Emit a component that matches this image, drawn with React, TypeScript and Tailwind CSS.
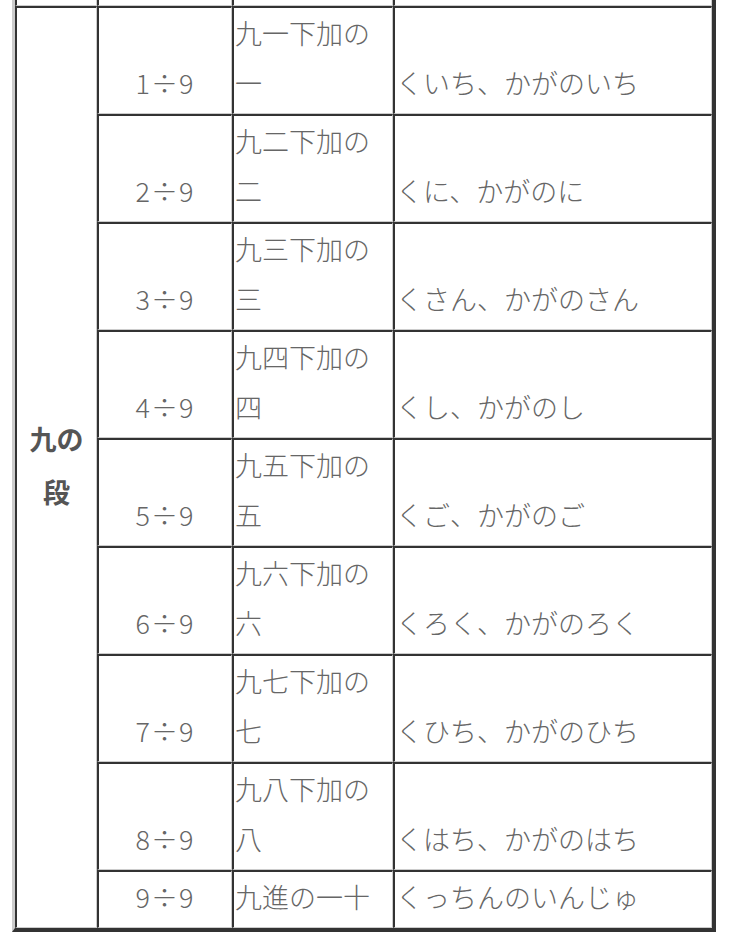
const rows: [string, string, string][] = [
  ["1÷9", "九一下加の一", "くいち、かがのいち"],
  ["2÷9", "九二下加の二", "くに、かがのに"],
  ["3÷9", "九三下加の三", "くさん、かがのさん"],
  ["4÷9", "九四下加の四", "くし、かがのし"],
  ["5÷9", "九五下加の五", "くご、かがのご"],
  ["6÷9", "九六下加の六", "くろく、かがのろく"],
  ["7÷9", "九七下加の七", "くひち、かがのひち"],
  ["8÷9", "九八下加の八", "くはち、かがのはち"],
  ["9÷9", "九進の一十", "くっちんのいんじゅ"],
];

const cell =
  "border-t-2 border-l-2 border-r border-b border-t-[#333] border-l-[#333] border-r-[#ccc] border-b-[#ccc] px-px pt-0 pb-[5px]";

export default function App() {
  return (
    <div
      className="h-[939px] overflow-hidden bg-white text-[27px] leading-[50px] font-light text-[#666]"
      style={{ fontFamily: '"Noto Sans CJK JP", "Noto Sans", sans-serif' }}
    >
      <table className="-mt-[55px] ml-[12px] table-fixed border-separate border-spacing-0 border-t-[3px] border-l-[3px] border-r-4 border-b-4 border-t-[#ccc] border-l-[#ccc] border-r-[#333] border-b-[#333]">
        <tbody>
          {/* tail of the previous section, cut off at the top */}
          <tr>
            <td className={`${cell} w-[82px]`}>&nbsp;</td>
            <td className={`${cell} w-[135px] text-center align-bottom`}>&nbsp;</td>
            <td className={`${cell} w-[161px] align-bottom`}>&nbsp;</td>
            <td className={`${cell} w-[319px] align-bottom`}>&nbsp;</td>
          </tr>
          {rows.map(([q, kanji, yomi], i) => (
            <tr key={q}>
              {i === 0 && (
                <td
                  rowSpan={rows.length}
                  className={`${cell} text-center align-middle font-bold leading-[53px] text-[#555]`}
                >
                  九の段
                </td>
              )}
              <td className={`${cell} text-center align-bottom tracking-[1px]`}>{q}</td>
              <td className={`${cell} align-bottom`}>{kanji}</td>
              <td className={`${cell} align-bottom`}>{yomi}</td>
            </tr>
          ))}
        </tbody>
      </table>
    </div>
  );
}
